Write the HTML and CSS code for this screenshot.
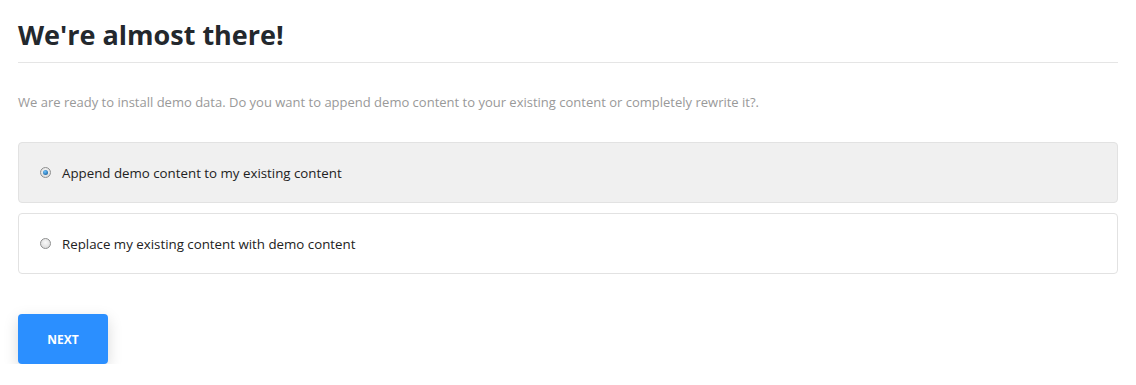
FILE: index.html
```html
<!DOCTYPE html>
<html>
<head>
<meta charset="utf-8">
<link rel="stylesheet" href="styles.css">
</head>
<body>
<div class="wizard">
	<h1 class="title">We're almost there!</h1>
	<p class="lead">We are ready to install demo data. Do you want to append demo content to your existing content or completely rewrite it?.</p>

	<label class="option selected">
		<input type="radio" name="mode" class="radio" checked>
		<span>Append demo content to my existing content</span>
	</label>
	<label class="option">
		<input type="radio" name="mode" class="radio">
		<span>Replace my existing content with demo content</span>
	</label>

	<button class="next">NEXT</button>
</div>
</body>
</html>
```

FILE: styles.css
```css
body{
	margin: 0;
	background: #fff;
	font-family: "Open Sans", "Noto Sans", sans-serif;
	color: #222;
}
.wizard{
	padding: 0 18px;
}
.title{
	margin: 0;
	padding: 16px 0 9px;
	font-size: 27px;
	line-height: 37px;
	font-weight: 700;
	color: #23282d;
	border-bottom: 1px solid #e5e5e5;
}
.lead{
	margin: 30px 0 31px;
	font-size: 13px;
	line-height: 18px;
	color: #999;
}
.option{
	display: flex;
	align-items: center;
	gap: 11px;
	height: 59px;
	padding: 0 21px;
	margin-bottom: 10px;
	border: 1px solid #e2e2e2;
	border-radius: 4px;
	font-size: 13.3px;
	color: #222;
	background: #fff;
}
.option.selected{
	background: #f0f0f0;
}
.radio{
	appearance: none;
	-webkit-appearance: none;
	margin: 0;
	width: 11px;
	height: 11px;
	border-radius: 50%;
	border: 1px solid #8e8f8f;
	background: radial-gradient(circle at 50% 40%, #fafafa, #d4d4d4);
	position: relative;
}
.radio:checked::after{
	content: "";
	position: absolute;
	left: 2px;
	top: 2px;
	width: 5px;
	height: 5px;
	border-radius: 50%;
	background: radial-gradient(circle at 40% 35%, #6ac1ff, #0a4f8a);
}
.next{
	margin-top: 30px;
	width: 90px;
	height: 50px;
	border: 0;
	border-radius: 4px;
	background: #2b8fff;
	color: #fff;
	font-family: inherit;
	font-size: 12px;
	font-weight: 700;
	box-shadow: 0 5px 15px rgba(0,0,0,0.15);
}
```
